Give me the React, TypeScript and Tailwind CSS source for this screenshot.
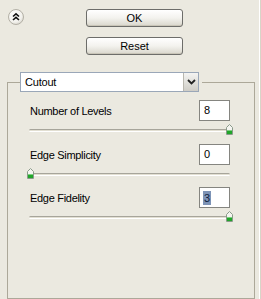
import React from 'react';

const font = { fontFamily: '"Liberation Sans", Arial, sans-serif' };

const CollapseIcon: React.FC = () => (
  <svg width="16" height="16" viewBox="0 0 16 16">
    <defs>
      <radialGradient id="cg" cx="40%" cy="35%" r="70%">
        <stop offset="0%" stopColor="#ffffff" />
        <stop offset="70%" stopColor="#f2f1ec" />
        <stop offset="100%" stopColor="#d6d3ca" />
      </radialGradient>
    </defs>
    <circle cx="8" cy="8" r="7.5" fill="url(#cg)" stroke="#b3b0a6" />
    <path d="M5 7.5 L8 4.8 L11 7.5" fill="none" stroke="#111" strokeWidth="1.6" />
    <path d="M5 11 L8 8.3 L11 11" fill="none" stroke="#111" strokeWidth="1.6" />
  </svg>
);

const Thumb: React.FC = () => (
  <svg width="7" height="11" viewBox="0 0 7 11">
    <path d="M3.5 0.5 L6.5 3.5 L6.5 10.5 L0.5 10.5 L0.5 3.5 Z" fill="#f4f4f0" stroke="#8a9a8a" />
    <rect x="1" y="7" width="5" height="3" fill="#21a52a" />
    <rect x="1" y="6" width="5" height="1" fill="#7ccf7f" />
  </svg>
);

const XpButton: React.FC<{ label: string }> = ({ label }) => (
  <button className="w-[97px] h-[18px] rounded-[3px] border border-[#6d6d6a] bg-gradient-to-b from-white via-[#f3f2ee] to-[#d9d6cc] text-[11px] text-black leading-none flex items-center justify-center shadow-[inset_0_-1px_0_#c9c5b8]">
    {label}
  </button>
);

const rows = [
  { label: 'Number of Levels', value: '8', atEnd: true, selected: false, gap: '' },
  { label: 'Edge Simplicity', value: '0', atEnd: false, selected: false, gap: 'mt-[9px]' },
  { label: 'Edge Fidelity', value: '3', atEnd: true, selected: true, gap: 'mt-[8px]' },
];

export default function App() {
  return (
    <div className="w-[261px] h-[299px] bg-[#ebe9e0] overflow-hidden flex" style={font}>
      <div className="w-[259px] flex flex-col">
        <div className="flex">
          <div className="w-[86px] pl-[8px] pt-[9px]">
            <CollapseIcon />
          </div>
          <div className="flex flex-col gap-[10px] pt-[9px]">
            <XpButton label="OK" />
            <XpButton label="Reset" />
          </div>
        </div>

        <fieldset className="mt-[17px] ml-[7px] w-[248px] h-[240px] border border-[#aca899] px-[12px]">
          <legend className="pr-[3px]">
            <div className="w-[179px] h-[20px] bg-white border border-[#9aa7b8] flex items-center">
              <span className="flex-1 pl-[4px] text-[11px] text-black tracking-[-0.2px]">Cutout</span>
              <div className="w-[15px] h-[18px] bg-gradient-to-b from-[#f4f4f2] to-[#cfcdc6] border-l border-[#b9b7ae] flex items-center justify-center">
                <svg width="9" height="6" viewBox="0 0 9 6">
                  <path d="M1 1 L4.5 4.5 L8 1" fill="none" stroke="#222" strokeWidth="1.8" />
                </svg>
              </div>
            </div>
          </legend>

          <div className="pt-[8px] ml-[7px] w-[206px] flex flex-col">
            {rows.map((row) => (
              <div key={row.label} className={`flex flex-col ${row.gap}`}>
                <div className="flex items-center justify-between">
                  <span className="ml-[3px] pt-[2px] text-[11px] text-black tracking-[-0.3px]">{row.label}</span>
                  <div className="mr-[3px] w-[31px] h-[21px] bg-white border border-[#858580] flex items-center pl-[3px] text-[11px] text-black">
                    {row.selected ? (
                      <span className="bg-[#7d93b6] text-[#0f1f3f] px-[1px] leading-[14px]">{row.value}</span>
                    ) : (
                      <span className="pl-[1px]">{row.value}</span>
                    )}
                  </div>
                </div>
                <div className="relative mt-[3px] h-[11px]">
                  <div className="absolute left-[2px] right-[3px] top-[5px] h-[3px] rounded-full border-t border-[#a7a59b] border-b border-b-white bg-[#e2dfd2]" />
                  <div className={row.atEnd ? 'absolute right-0 top-0' : 'absolute left-0 top-0'}>
                    <Thumb />
                  </div>
                </div>
              </div>
            ))}
          </div>
        </fieldset>
      </div>
      <div className="w-[1px] bg-white" />
      <div className="w-[1px] bg-[#d8d5c8]" />
    </div>
  );
}
